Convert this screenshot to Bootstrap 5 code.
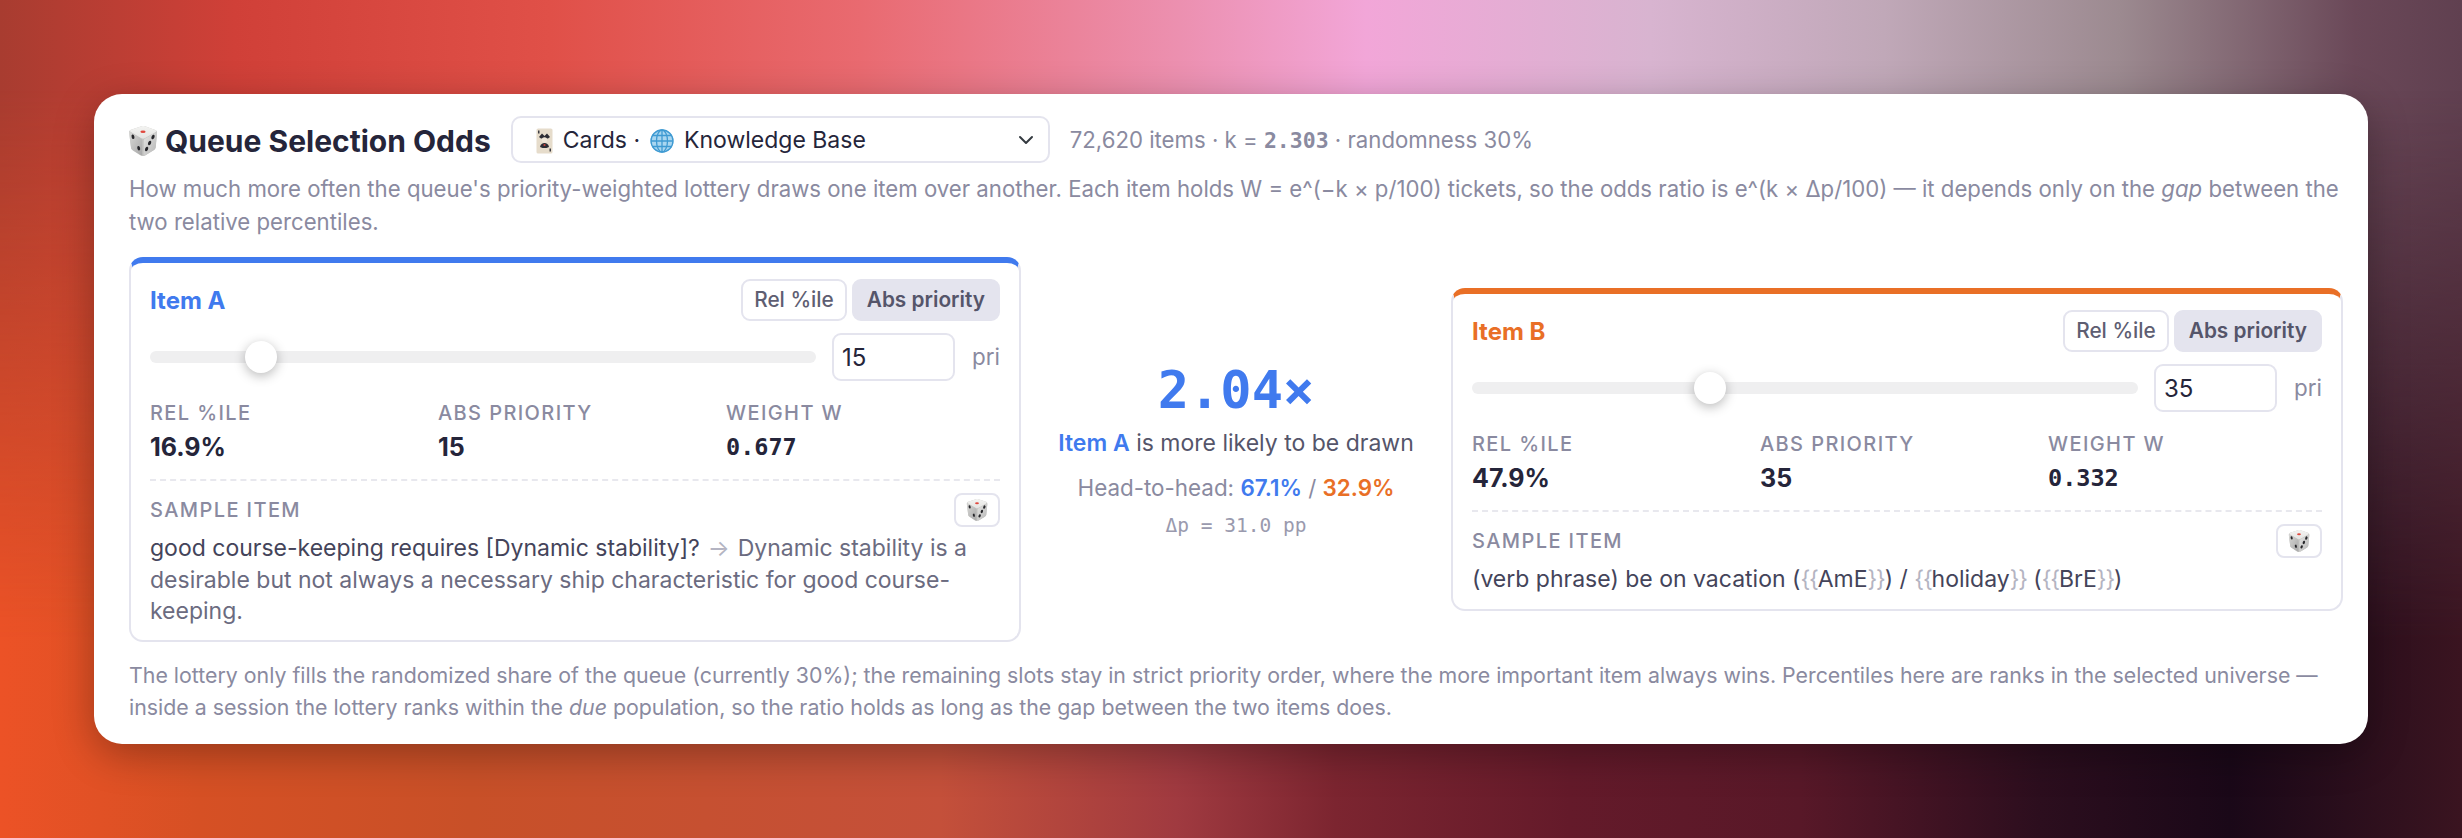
<!DOCTYPE html>
<html lang="en">
<head>
<meta charset="utf-8">
<title>Queue Selection Odds</title>
<link rel="stylesheet" href="https://cdn.jsdelivr.net/npm/bootstrap@5.3.0/dist/css/bootstrap.min.css">
<style>
html,body{height:100%;}
body{font-family:"Inter","Liberation Sans",sans-serif;color:#25253a;overflow:hidden;
 background:linear-gradient(90deg,#a83c30 0,#d04038 235px,#e05048 550px,#e96a70 860px,#ec90b0 1180px,#f2a6d8 1366px,#d8b4d0 1650px,#c0a8b8 1884px,#9c8a90 2120px,#6a4858 2355px,#604050 2462px);
}
.stage{height:838px;padding:94px;position:relative;}
.dark-wash{position:absolute;inset:0;
 background:linear-gradient(90deg,#ec5226 0,#d65024 200px,#c85028 470px,#c4503a 940px,#a03a40 1177px,#7c2530 1335px,#641a2a 1570px,#581828 1800px,#2c0e1e 2040px,#1a0818 2230px,#3a1420 2462px);
 -webkit-mask-image:linear-gradient(to bottom,rgba(0,0,0,0) 0,rgba(0,0,0,0) 90px,#000 640px,#000 100%);
 mask-image:linear-gradient(to bottom,rgba(0,0,0,0) 0,rgba(0,0,0,0) 90px,#000 640px,#000 100%);}
.odds-panel{position:relative;background:#fff;border-radius:28px;height:650px;padding:22px 25px 0 35px;box-shadow:0 10px 40px rgba(0,0,0,.3);}
.head-row{display:flex;align-items:center;gap:20px;height:47px;margin-left:-1px;}
.odds-title{font-size:30px;font-weight:700;line-height:1;margin:0;padding-top:2px;display:flex;align-items:center;gap:7px;color:#25253a;white-space:nowrap;}
.universe{width:539px;height:47px;flex:none;font-size:23px;line-height:1.4;color:#25253a;border:2px solid #e4e4ee;border-radius:10px;padding:2px 36px 0 23px;display:flex;align-items:center;gap:10px;background-size:22px 16px;background-position:right 11px center;}
.head-meta{font-size:22.2px;color:#8a8aa0;white-space:nowrap;padding-top:1px;}
.head-meta b{font-family:"DejaVu Sans Mono",monospace;font-size:21.5px;font-weight:700;}
.note{font-size:22.2px;line-height:33px;color:#8a8aa0;margin:9px 0 0;}
.versus{display:flex;align-items:center;margin-top:19px;height:385px;}
.item-card{flex:1 1 0;min-width:0;border:2px solid #e4e4ee;border-top:6px solid;border-radius:14px;padding:16px 19px 0 19px;}
.item-card.side-a{border-top-color:#407aee;height:385px;}
.item-card.side-b{border-top-color:#e96f26;height:323px;}
.middle{flex:0 0 430px;text-align:center;}
.card-top{display:flex;justify-content:space-between;align-items:center;height:42px;}
.item-name{font-size:24px;font-weight:700;padding-top:2px;}
.tone-a{color:#407aee;} .tone-b{color:#e96f26;}
.mode-pick{display:flex;gap:5px;}
.mode-pick .btn{height:42px;font-size:20.8px;line-height:1;padding:0 11px;border:2px solid #e4e4ee;border-radius:9px;color:#5e5e72;background:#fff;font-weight:500;}
.mode-pick .btn.on{background:#e4e4ee;color:#55556a;font-weight:600;padding:0 13px;}
.slide-row{display:flex;align-items:center;margin-top:12px;height:48px;}
.slide-row .form-range{flex:1 1 0;height:32px;padding:0;margin-right:16px;}
.form-range::-webkit-slider-runnable-track{height:12px;background:#efeff0;border-radius:6px;}
.form-range::-webkit-slider-thumb{width:32px;height:32px;margin-top:-10px;background:#fff;border:0;box-shadow:0 3px 12px rgba(0,0,0,.28);}
.slide-row .form-control{flex:0 0 123px;width:123px;height:48px;font-size:24px;padding:0 8px;border:2px solid #e4e4ee;border-radius:9px;color:#25253a;}
.unit{font-size:22.4px;color:#8a8aa0;width:45px;text-align:right;}
.facts{display:grid;grid-template-columns:repeat(3,1fr);gap:14px;margin-top:19px;padding-bottom:15px;border-bottom:2px dashed #e8e8ee;}
.fact-label{font-size:20px;line-height:26px;font-weight:500;letter-spacing:1.4px;text-transform:uppercase;color:#8a8aa0;}
.fact-value{font-size:25px;line-height:34px;margin-top:4px;font-weight:700;color:#25253a;}
.fact-value.mono{font-family:"DejaVu Sans Mono",monospace;font-size:23.5px;}
.sample-top{display:flex;justify-content:space-between;align-items:center;margin-top:12px;height:34px;}
.sample-top .btn{width:46px;height:34px;padding:0;border:2px solid #e4e4ee;border-radius:8px;display:flex;align-items:center;justify-content:center;background:#fff;}
.sample-text{font-size:23px;line-height:31.5px;color:#6b6b80;margin-top:6px;}
.sample-text .front{color:#44445a;}
.sample-text .soft{color:#b4b4c2;margin:0 1.5px;}
.sample-text .brace{color:#b4b4c2;letter-spacing:-1.2px;}
.big-odds{font-family:"DejaVu Sans Mono",monospace;font-weight:700;font-size:52px;line-height:60px;color:#407aee;}
.verdict{font-size:23px;line-height:30px;color:#55556a;margin-top:8px;}
.verdict b{font-weight:600;}
.h2h{font-size:22.4px;line-height:30px;color:#8a8aa0;margin-top:15px;}
.h2h b{font-weight:600;}
.gap-line{font-family:"DejaVu Sans Mono",monospace;font-size:19.5px;line-height:26px;color:#9a9aae;margin-top:10px;}
.foot{font-size:21.33px;line-height:32px;color:#8a8aa0;margin:17px 0 0;}
</style>
</head>
<body>
<svg width="0" height="0" class="d-block position-absolute">
 <defs>
  <linearGradient id="dieTop" x1="0" y1="0" x2="0" y2="1"><stop offset="0" stop-color="#f4f4f2"/><stop offset="1" stop-color="#e4e4e2"/></linearGradient>
  <linearGradient id="dieL" x1="0" y1="0" x2="1" y2="1"><stop offset="0" stop-color="#d8d8d6"/><stop offset="1" stop-color="#a8a8a8"/></linearGradient>
  <linearGradient id="dieR" x1="0" y1="0" x2="1" y2="1"><stop offset="0" stop-color="#e6e6e4"/><stop offset="1" stop-color="#b6b6b6"/></linearGradient>
  <symbol id="die" viewBox="0 0 30 32">
   <path d="M13.5 1.2 3 4.8C1.4 5.4 1 6.4 1.2 8L3 22.5c.2 1.5.8 2.3 2.2 3.2l7 4.6c1.6 1 3.4 1 5 .1l8-4.8c1.3-.8 2-1.6 2.3-3L29 8.4c.3-1.7-.1-2.8-1.8-3.5L17 1.2c-1.2-.4-2.3-.4-3.5 0Z" fill="#c4c4c2"/>
   <path d="M13.5 1.2 3 4.8C1.6 5.3 1.6 6.3 2.8 7l10.6 6.2c1.1.6 2.2.6 3.3 0L27.4 7.2c1.3-.8 1.2-1.8-.2-2.3L17 1.2c-1.2-.4-2.3-.4-3.5 0Z" fill="url(#dieTop)"/>
   <path d="M1.7 6.8 13 13.6c.9.5 1.3 1.2 1.3 2.2v14.7c-.8-.1-1.5-.3-2.1-.7l-7-4.5C3.8 24.5 3.2 23.7 3 22.5L1.2 8c0-.5.2-1 .5-1.2Z" fill="url(#dieL)"/>
   <path d="M28.6 7 17.2 13.6c-.9.5-1.4 1.2-1.4 2.2v14.7c.6-.1 1.3-.3 1.9-.6l7.8-4.7c1.3-.8 2-1.6 2.3-3L29 8.4c.1-.6 0-1-.4-1.4Z" fill="url(#dieR)"/>
   <ellipse cx="15" cy="6.8" rx="2.6" ry="1.3" fill="#e0483e"/>
   <ellipse cx="5" cy="11.8" rx="1.4" ry="2.3" transform="rotate(-14 5 11.8)" fill="#26262a"/>
   <ellipse cx="10.7" cy="23.2" rx="1.4" ry="2.3" transform="rotate(-14 10.7 23.2)" fill="#26262a"/>
   <ellipse cx="25" cy="12" rx="1.5" ry="2.4" transform="rotate(22 25 12)" fill="#26262a"/>
   <ellipse cx="21.6" cy="18" rx="1.5" ry="2.4" transform="rotate(22 21.6 18)" fill="#26262a"/>
   <ellipse cx="18.6" cy="24" rx="1.5" ry="2.4" transform="rotate(22 18.6 24)" fill="#26262a"/>
  </symbol>
  <symbol id="joker" viewBox="0 0 17 26">
   <rect x=".5" y=".5" width="16" height="25" rx="1.6" fill="#e6dccb"/>
   <path d="M3 9 6 5.5 8.5 8 11 5.5 14 9l-2 1.4H5Z" fill="#2c2c34"/>
   <circle cx="8.5" cy="12" r="2.7" fill="#efe6d8"/>
   <path d="M4 19c.6-3 2.4-4 4.5-4s3.9 1 4.5 4l-2.5 1H6.5Z" fill="#2c2c34"/>
   <circle cx="8.5" cy="17" r="1.1" fill="#c8443c"/>
   <path d="M2 2.5h1.5v3H2zM13.5 20.5H15v3h-1.5z" fill="#3a3a40"/>
  </symbol>
  <symbol id="globe" viewBox="0 0 24 24">
   <circle cx="12" cy="12" r="11.5" fill="#a9d6f0"/>
   <g fill="none" stroke="#3f9ad2" stroke-width="1.3">
    <circle cx="12" cy="12" r="11"/>
    <ellipse cx="12" cy="12" rx="5.5" ry="11"/>
    <path d="M12 1v22M1 12h22M2.6 6.5h18.8M2.6 17.5h18.8"/>
   </g>
  </symbol>
 </defs>
</svg>
<div class="dark-wash"></div>
<main class="stage">
 <section class="odds-panel">
  <div class="head-row">
   <h1 class="odds-title"><svg width="30" height="32"><use href="#die"/></svg>Queue Selection Odds</h1>
   <div class="form-select universe"><svg width="17" height="26"><use href="#joker"/></svg><span>Cards ·</span><svg width="24" height="24"><use href="#globe"/></svg><span>Knowledge Base</span></div>
   <div class="head-meta">72,620 items · k = <b>2.303</b> · randomness 30%</div>
  </div>
  <p class="note">How much more often the queue's priority-weighted lottery draws one item over another. Each item holds W = e^(−k × p/100) tickets, so the odds ratio is e^(k × Δp/100) — it depends only on the <em>gap</em> between the two relative percentiles.</p>
  <div class="versus">
   <article class="item-card side-a">
    <div class="card-top">
     <span class="item-name tone-a">Item A</span>
     <div class="mode-pick"><button class="btn" type="button">Rel %ile</button><button class="btn on" type="button">Abs priority</button></div>
    </div>
    <div class="slide-row">
     <input class="form-range" type="range" min="0" max="100" value="15" aria-label="Item A priority">
     <input class="form-control" type="text" value="15" aria-label="Item A value">
     <span class="unit">pri</span>
    </div>
    <div class="facts">
     <div><div class="fact-label">Rel %ile</div><div class="fact-value">16.9%</div></div>
     <div><div class="fact-label">Abs priority</div><div class="fact-value">15</div></div>
     <div><div class="fact-label">Weight W</div><div class="fact-value mono">0.677</div></div>
    </div>
    <div class="sample-top">
     <span class="fact-label">Sample item</span>
     <button class="btn" type="button" aria-label="Reroll"><svg width="22" height="24"><use href="#die"/></svg></button>
    </div>
    <div class="sample-text"><span class="front">good course-keeping requires [Dynamic stability]?</span> <span class="soft">→</span> Dynamic stability is a desirable but not always a necessary ship characteristic for good course-keeping.</div>
   </article>
   <div class="middle">
    <div class="big-odds">2.04×</div>
    <div class="verdict"><b class="tone-a">Item A</b> is more likely to be drawn</div>
    <div class="h2h">Head-to-head: <b class="tone-a">67.1%</b> / <b class="tone-b">32.9%</b></div>
    <div class="gap-line">Δp = 31.0 pp</div>
   </div>
   <article class="item-card side-b">
    <div class="card-top">
     <span class="item-name tone-b">Item B</span>
     <div class="mode-pick"><button class="btn" type="button">Rel %ile</button><button class="btn on" type="button">Abs priority</button></div>
    </div>
    <div class="slide-row">
     <input class="form-range" type="range" min="0" max="100" value="35" aria-label="Item B priority">
     <input class="form-control" type="text" value="35" aria-label="Item B value">
     <span class="unit">pri</span>
    </div>
    <div class="facts">
     <div><div class="fact-label">Rel %ile</div><div class="fact-value">47.9%</div></div>
     <div><div class="fact-label">Abs priority</div><div class="fact-value">35</div></div>
     <div><div class="fact-label">Weight W</div><div class="fact-value mono">0.332</div></div>
    </div>
    <div class="sample-top">
     <span class="fact-label">Sample item</span>
     <button class="btn" type="button" aria-label="Reroll"><svg width="22" height="24"><use href="#die"/></svg></button>
    </div>
    <div class="sample-text"><span class="front">(verb phrase) be on vacation (<span class="brace">{{</span>AmE<span class="brace">}}</span>) / <span class="brace">{{</span>holiday<span class="brace">}}</span> (<span class="brace">{{</span>BrE<span class="brace">}}</span>)</span></div>
   </article>
  </div>
  <p class="foot">The lottery only fills the randomized share of the queue (currently 30%); the remaining slots stay in strict priority order, where the more important item always wins. Percentiles here are ranks in the selected universe — inside a session the lottery ranks within the <em>due</em> population, so the ratio holds as long as the gap between the two items does.</p>
 </section>
</main>
<script src="https://cdn.jsdelivr.net/npm/bootstrap@5.3.0/dist/js/bootstrap.bundle.min.js"></script>
</body>
</html>
